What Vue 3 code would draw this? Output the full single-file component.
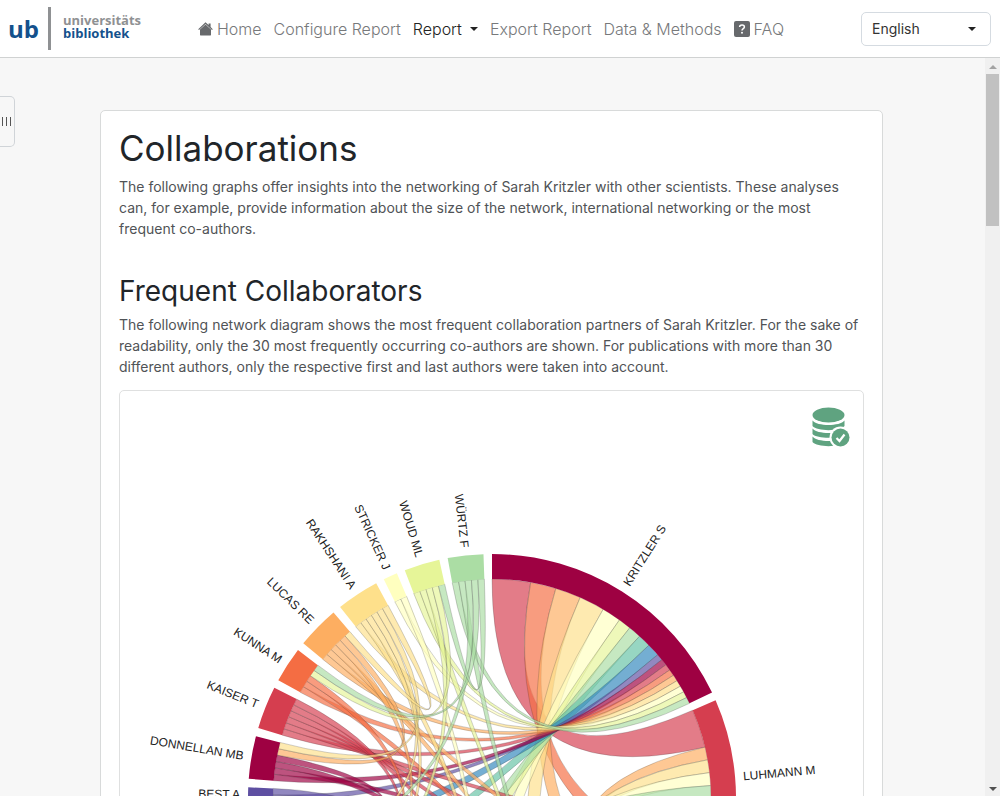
<template>
  <div class="page">
    <!-- top navigation -->
    <header class="topbar">
      <a class="logo" href="#">
        <span class="logo-mark">ub</span>
        <span class="logo-line"></span>
        <span class="logo-text">
          <span class="logo-top">universitäts</span>
          <span class="logo-bottom">bibliothek</span>
        </span>
      </a>
      <nav class="nav">
        <a href="#" class="nav-link">
          <svg class="home-icon" width="15" height="14" viewBox="0 0 15 14">
            <path d="M7.5 0.3 L10.6 3.1 V1.4 H12.6 V5 L14.8 7.2 L14 8 L7.5 2.1 L1 8 L0.2 7.2 Z" />
            <path d="M7.5 2.6 L13 7.6 V12.4 A1.2 1.2 0 0 1 11.8 13.6 H3.2 A1.2 1.2 0 0 1 2 12.4 V7.6 Z" />
          </svg>
          Home
        </a>
        <a href="#" class="nav-link">Configure Report</a>
        <a href="#" class="nav-link active">Report <span class="caret"></span></a>
        <a href="#" class="nav-link">Export Report</a>
        <a href="#" class="nav-link">Data &amp; Methods</a>
        <a href="#" class="nav-link">
          <svg class="faq-icon" width="16" height="16" viewBox="0 0 16 16">
            <rect width="16" height="16" rx="2" />
            <path d="M5.6 6 C5.7 3.2 10.4 3.2 10.4 6 C10.4 7.6 8 7.6 8 9.4" fill="none" stroke="#fff" stroke-width="1.5" />
            <circle cx="8" cy="11.8" r="1" fill="#fff" />
          </svg>
          FAQ
        </a>
      </nav>
      <select v-model="language" class="language" aria-label="Language">
        <option>English</option>
        <option>Deutsch</option>
      </select>
    </header>

    <div class="body">
      <button class="drawer-handle" aria-label="Open sidebar">
        <i></i><i></i><i></i>
      </button>

      <main class="content">
        <section class="card">
          <h1>Collaborations</h1>
          <p>
            The following graphs offer insights into the networking of Sarah Kritzler with other
            scientists. These analyses can, for example, provide information about the size of the
            network, international networking or the most frequent co-authors.
          </p>

          <h2>Frequent Collaborators</h2>
          <p>
            The following network diagram shows the most frequent collaboration partners of Sarah
            Kritzler. For the sake of readability, only the 30 most frequently occurring co-authors
            are shown. For publications with more than 30 different authors, only the respective
            first and last authors were taken into account.
          </p>

          <div class="chart-card">
            <button class="data-button" aria-label="Data quality">
              <svg width="38" height="40" viewBox="0 0 38 40">
                <ellipse cx="16.5" cy="8" rx="16" ry="7.6" />
                <path d="M0.5 13.5 C5 19.5 28 19.5 32.5 13.5 V19 C28 24.5 5 24.5 0.5 19 Z" />
                <path d="M0.5 21.5 C5 27.5 28 27.5 32.5 21.5 V27 C28 32 5 32 0.5 27 Z" />
                <path d="M0.5 29.5 C5 35.5 28 35.5 32.5 29.5 V35 C28 40.5 5 40.5 0.5 35 Z" />
                <circle cx="28.5" cy="30.5" r="11" fill="#fff" />
                <circle cx="28.5" cy="30.5" r="9" />
                <path d="M24.5 31 L27.5 34 L32.5 27.5" fill="none" stroke="#fff" stroke-width="2.2" />
              </svg>
            </button>

            <!-- chord diagram -->
            <svg class="chord" viewBox="0 0 743 820">
              <g transform="translate(372 407)">
                <path
                  v-for="(r, i) in ribbons"
                  :key="'r' + i"
                  :d="r.d"
                  :fill="r.color"
                  class="ribbon"
                />
                <path v-for="(g, i) in groups" :key="'g' + i" :d="g.d" :fill="g.color" />
                <text
                  v-for="(g, i) in labels"
                  :key="'t' + i"
                  :transform="g.transform"
                  :text-anchor="g.anchor"
                  dy="4"
                  class="label"
                >{{ g.name }}</text>
              </g>
            </svg>
          </div>
        </section>
      </main>

      <div class="scrollbar">
        <span class="arrow up"></span>
        <span class="thumb"></span>
        <span class="arrow down"></span>
      </div>
    </div>
  </div>
</template>

<script setup>
import { ref } from 'vue'

const language = ref('English')

const palette = [
  '#9e0142', '#d53e4f', '#f46d43', '#fdae61', '#fee08b', '#ffffbf',
  '#e6f598', '#abdda4', '#66c2a5', '#3288bd', '#5e4fa2'
]

const names = [
  'KRITZLER S', 'LUHMANN M', '', '', '', '', '', '', '', '', 'BEST A', 'DONNELLAN MB',
  'KAISER T', 'KUNNA M', 'LUCAS RE', 'RAKHSHANI A', 'STRICKER J', 'WOUD ML', 'WÜRTZ F'
]

// [author, co-author, shared publications]
const links = [
  [0, 1, 6], [0, 2, 4], [0, 3, 4], [0, 4, 4], [0, 5, 3], [0, 6, 2], [0, 7, 2], [0, 8, 2], [0, 9, 2],
  [0, 10, 1], [0, 11, 1], [0, 12, 1], [0, 13, 1], [0, 14, 1], [0, 15, 1], [0, 16, 1], [0, 17, 1], [0, 18, 1],
  [1, 3, 2], [1, 4, 2], [1, 5, 2], [1, 7, 4], [1, 8, 3], [1, 9, 2], [1, 12, 1],
  [2, 3, 3], [2, 4, 2], [2, 5, 1], [2, 11, 1], [2, 12, 1], [2, 14, 1],
  [3, 5, 2], [3, 12, 1], [3, 13, 1], [3, 14, 1], [3, 17, 1], [3, 18, 1],
  [4, 6, 2], [4, 11, 1], [4, 12, 1], [4, 15, 1], [4, 16, 1],
  [5, 7, 1], [6, 9, 1], [6, 10, 1],
  [7, 12, 1], [7, 13, 1], [7, 14, 1], [7, 15, 1], [7, 17, 1],
  [8, 9, 2], [8, 11, 1], [8, 15, 1], [8, 18, 1],
  [11, 14, 1], [11, 15, 1], [13, 17, 1], [13, 18, 1], [14, 15, 1], [17, 18, 1]
]

const OUTER = 244
const INNER = 219
const PAD = (2 * Math.PI) / 180

const n = names.length
const matrix = names.map(() => new Array(n).fill(0))
links.forEach(([a, b, v]) => {
  matrix[a][b] = v
  matrix[b][a] = v
})
const total = matrix.flat().reduce((s, v) => s + v, 0)
const unit = (2 * Math.PI - PAD * n) / total

// clockwise from twelve o'clock
const point = (angle, r) => `${(Math.sin(angle) * r).toFixed(2)} ${(-Math.cos(angle) * r).toFixed(2)}`

const groups = []
const slots = names.map(() => [])
let angle = 0
names.forEach((name, i) => {
  const start = angle
  for (let j = 0; j < n; j++) {
    slots[i][j] = [angle, angle + matrix[i][j] * unit]
    angle = slots[i][j][1]
  }
  groups.push({
    name,
    color: palette[i % palette.length],
    mid: (start + angle) / 2,
    d: `M${point(start, OUTER)}A${OUTER} ${OUTER} 0 0 1 ${point(angle, OUTER)}L${point(angle, INNER)}A${INNER} ${INNER} 0 0 0 ${point(start, INNER)}Z`
  })
  angle += PAD
})

const ribbons = links.map(([a, b]) => {
  const [s0, s1] = slots[a][b]
  const [t0, t1] = slots[b][a]
  return {
    color: palette[b % palette.length],
    d: `M${point(s0, INNER)}A${INNER} ${INNER} 0 0 1 ${point(s1, INNER)}Q0 0 ${point(t0, INNER)}A${INNER} ${INNER} 0 0 1 ${point(t1, INNER)}Q0 0 ${point(s0, INNER)}Z`
  }
})

const labels = groups.filter((g) => g.name).map((g) => {
  const left = g.mid > Math.PI
  const deg = (g.mid * 180) / Math.PI - 90
  return {
    name: g.name,
    anchor: left ? 'end' : 'start',
    transform: `rotate(${deg}) translate(252 0)` + (left ? ' rotate(180)' : '')
  }
})
</script>

<style>
body {
  margin: 0;
  overflow: hidden;
}
</style>

<style scoped>
* {
  box-sizing: border-box;
}

.page {
  display: flex;
  flex-direction: column;
  height: 100vh;
  font-family: Inter, 'Liberation Sans', sans-serif;
  color: #212529;
  background: #f7f7f7;
}

.topbar {
  display: flex;
  align-items: center;
  flex: none;
  height: 58px;
  padding: 0 9px 0 8px;
  background: #fff;
  border-bottom: 1px solid #d0d2d2;
}

.logo {
  display: flex;
  align-items: center;
  width: 190px;
  text-decoration: none;
  font-family: 'Open Sans', sans-serif;
  font-weight: 700;
  color: #14518c;
}

.logo-mark {
  width: 40px;
  font-size: 24px;
}

.logo-line {
  width: 3px;
  height: 43px;
  margin-right: 12px;
  background: #8f9193;
}

.logo-text {
  display: flex;
  flex-direction: column;
  padding-bottom: 3px;
  font-size: 13px;
  line-height: 13px;
}

.logo-top {
  color: #8f9193;
}

.nav {
  display: flex;
  flex: 1;
  gap: 12px;
}

.nav-link {
  display: flex;
  align-items: center;
  gap: 4px;
  font-size: 16px;
  font-weight: 300;
  color: #77797b;
  text-decoration: none;
  white-space: nowrap;
}

.nav-link.active {
  color: #222;
}

.home-icon,
.faq-icon {
  fill: #67696c;
}

.caret {
  margin-left: 4px;
  border: 4px solid transparent;
  border-top-color: #222;
  border-bottom: 0;
}

.language {
  width: 130px;
  height: 34px;
  padding: 0 10px;
  appearance: none;
  border: 1px solid #d5dbe1;
  border-radius: 5px;
  font-family: inherit;
  font-size: 14px;
  color: #333;
  background: #fff url("data:image/svg+xml,%3Csvg xmlns='http://www.w3.org/2000/svg' width='8' height='4'%3E%3Cpath d='M0 0h8L4 4z' fill='%23222'/%3E%3C/svg%3E") no-repeat right 14px center;
}

.body {
  position: relative;
  display: flex;
  flex: 1;
  min-height: 0;
}

.drawer-handle {
  position: absolute;
  top: 38px;
  left: 0;
  display: flex;
  align-items: center;
  justify-content: flex-end;
  gap: 3px;
  width: 15px;
  height: 51px;
  padding: 0 3px 0 0;
  border: 1px solid #d0d4d8;
  border-left: 0;
  border-radius: 0 5px 5px 0;
  background: #f7f7f7;
}

.drawer-handle i {
  width: 1px;
  height: 9px;
  background: #555;
}

.content {
  flex: 1;
  padding: 52px 102px 0 100px;
  overflow: hidden;
}

.card {
  padding: 16px 18px 18px;
  border: 1px solid #d8dada;
  border-radius: 5px;
  background: #fff;
}

h1,
h2 {
  margin: 0;
  font-weight: 400;
}

h1 {
  font-size: 35px;
  line-height: 42px;
}

h2 {
  margin-top: 36px;
  font-size: 28px;
  line-height: 32px;
}

p {
  margin: 7px 0 0;
  font-size: 14px;
  line-height: 21px;
  color: #505356;
}

.chart-card {
  position: relative;
  margin-top: 13px;
  border: 1px solid #dfe0e0;
  border-radius: 5px;
}

.chord {
  display: block;
  width: 100%;
  height: auto;
}

.ribbon {
  fill-opacity: 0.68;
  stroke: #333;
  stroke-opacity: 0.28;
  stroke-width: 0.8;
}

.label {
  font-family: 'Liberation Sans', Arial, sans-serif;
  font-size: 12px;
  fill: #222;
}

.data-button {
  position: absolute;
  top: 16px;
  right: 13px;
  padding: 0;
  border: 0;
  background: none;
  line-height: 0;
}

.data-button svg {
  fill: #5fa380;
}

.scrollbar {
  display: flex;
  flex-direction: column;
  align-items: center;
  width: 15px;
  padding: 7px 0 5px;
  background: #f0f0f0;
}

.arrow {
  border: 4px solid transparent;
}

.arrow.up {
  border-top: 0;
  border-bottom-color: #a3a3a3;
}

.arrow.down {
  margin-top: auto;
  border-bottom: 0;
  border-top-color: #505050;
}

.thumb {
  width: 13px;
  height: 21%;
  margin-top: 5px;
  background: #c1c1c1;
}
</style>
